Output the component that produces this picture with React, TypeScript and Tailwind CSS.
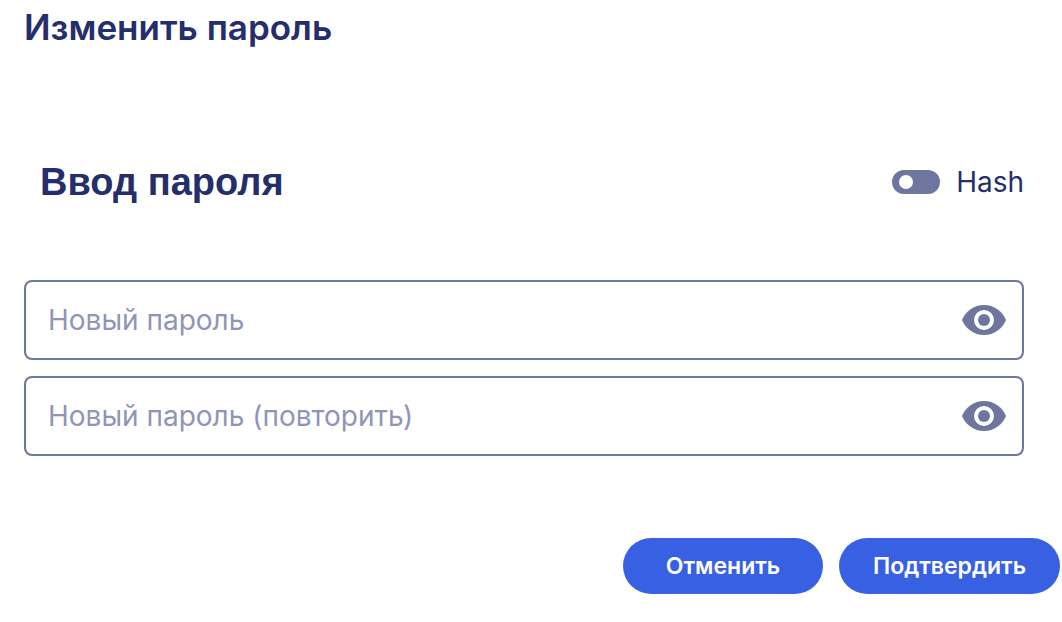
import { useState } from 'react';

function PasswordField({ id, label }: { id: string; label: string }) {
  const [visible, setVisible] = useState(false);
  return (
    <div className="flex h-20 items-center rounded-lg border-2 border-[#6e759f] pr-4 pl-[22px]">
      <input
        id={id}
        type={visible ? 'text' : 'password'}
        aria-label={label}
        placeholder={label}
        className="min-w-0 flex-1 bg-transparent text-[28px] leading-[72px] text-[#252e6c] outline-none placeholder:text-[#9095b7]"
      />
      <button type="button" aria-label="Показать пароль" onClick={() => setVisible(!visible)}>
        <svg viewBox="0 0 44 30" className="h-[30px] w-11" fill="none">
          <path d="M22 0C12 0 3.5 6.2 0 15c3.5 8.800 12 15 22 15s18.500-6.200 22-15C40.500 6.200 32 0 22 0Z" fill="#6e759f" />
          <circle cx="22" cy="15" r="10" fill="#fff" />
          <circle cx="22" cy="15" r="6" fill="#6e759f" />
        </svg>
      </button>
    </div>
  );
}

export default function App() {
  return (
    <main className="min-h-screen bg-white pt-1 font-['Inter',sans-serif] text-[#252e6c]">
      <h1 className="px-6 text-[35px] leading-[46px] font-semibold">Изменить пароль</h1>
      <form onSubmit={(e) => e.preventDefault()}>
        <div className="mt-[108px] flex h-12 items-center justify-between pr-[38px] pl-10">
          <h2 className="font-['Liberation_Sans',sans-serif] text-[38px] leading-[48px] font-bold">Ввод пароля</h2>
          <label className="flex cursor-pointer items-center gap-4 text-[28px] leading-10">
            <input
              type="checkbox"
              role="switch"
              className="h-6 w-12 appearance-none rounded-full bg-[#6e759f] px-[7px] py-[5px] before:block before:size-[14px] before:rounded-full before:bg-white checked:before:ml-5"
            />
            Hash
          </label>
        </div>
        <div className="mt-[74px] flex flex-col gap-4 pr-[38px] pl-6">
          <PasswordField id="new-password" label="Новый пароль" />
          <PasswordField id="repeat-password" label="Новый пароль (повторить)" />
        </div>
        <div className="mt-[82px] flex justify-end gap-4 pr-[2px] pb-7 text-[23px] font-semibold text-white">
          <button type="button" className="h-14 w-[200px] rounded-full bg-[#3761e2]">Отменить</button>
          <button type="submit" className="h-14 w-[221px] rounded-full bg-[#3761e2]">Подтвердить</button>
        </div>
      </form>
    </main>
  );
}
